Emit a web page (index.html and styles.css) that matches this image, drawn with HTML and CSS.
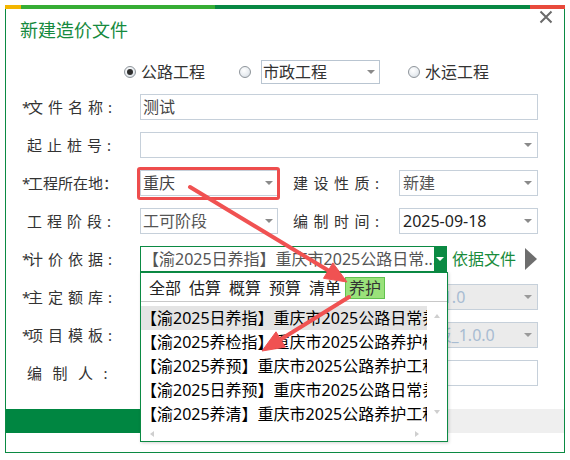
FILE: index.html
```html
<!DOCTYPE html>
<html lang="zh-CN">
<head>
<meta charset="utf-8">
<title>新建造价文件</title>
<link rel="stylesheet" href="styles.css">
</head>
<body>
<div class="dialog">
  <div class="stripe"><i class="s-yellow"></i><i class="s-light"></i><i class="s-dark"></i><i class="s-red"></i></div>
  <div class="header">
    <div class="title">新建造价文件</div>
    <svg class="close" width="14" height="14" viewBox="0 0 14 14"><path d="M1.5 1.5 L12.5 12.5 M12.5 1.5 L1.5 12.5" stroke="#6a6a6a" stroke-width="2" fill="none"/></svg>
  </div>
  <div class="radios">
    <span class="radio on"></span><span class="rtext">公路工程</span>
    <span class="radio r2"></span>
    <div class="msel"><span class="val">市政工程</span><span class="caret"></span></div>
    <span class="radio r3"></span><span class="rtext">水运工程</span>
  </div>
  <div class="form">
    <div class="row">
      <div class="lbl ls5"><span class="star">*</span>文件名称:</div>
      <div class="field w-full"><span class="val">测试</span></div>
    </div>
    <div class="row">
      <div class="lbl ls5 ind">起止桩号:</div>
      <div class="field w-full"><span class="val"></span><span class="caret"></span></div>
    </div>
    <div class="row">
      <div class="lbl"><span class="star">*</span>工程所在地：</div>
      <div class="field w-half hlwrap"><span class="val">重庆</span><span class="caret"></span><span class="hl"></span></div>
      <div class="lbl2 ls55">建设性质:</div>
      <div class="field w-right"><span class="val soft">新建</span><span class="caret"></span></div>
    </div>
    <div class="row">
      <div class="lbl ls5 ind">工程阶段:</div>
      <div class="field w-half"><span class="val soft">工可阶段</span><span class="caret"></span></div>
      <div class="lbl2 ls55">编制时间:</div>
      <div class="field w-right"><span class="val dark">2025-09-18</span><span class="caret"></span></div>
    </div>
    <div class="row">
      <div class="lbl ls5"><span class="star">*</span>计价依据:</div>
      <div class="field w-basis active">
        <span class="val soft">【渝2025日养指】重庆市2025公路日常...</span>
        <span class="dbtn"><span class="wcaret"></span></span>
        <div class="popup">
          <div class="tabs">
            <span class="tab">全部</span><span class="tab">估算</span><span class="tab">概算</span><span class="tab">预算</span><span class="tab">清单</span><span class="tab on">养护</span>
          </div>
          <div class="pbody">
            <div class="list">
              <div class="item sel">【渝2025日养指】重庆市2025公路日常养护指标</div>
              <div class="item">【渝2025养检指】重庆市2025公路养护检测指标</div>
              <div class="item">【渝2025养预】重庆市2025公路养护工程预算定额</div>
              <div class="item">【渝2025日养预】重庆市2025公路日常养护预算定额</div>
              <div class="item">【渝2025养清】重庆市2025公路养护工程清单</div>
            </div>
            <div class="vscroll"><span class="up"></span><span class="down"></span></div>
            <div class="hscroll"><span class="left"></span><span class="right"></span></div>
            <div class="corner"></div>
          </div>
        </div>
      </div>
      <span class="doclink">依据文件</span>
      <span class="play"></span>
    </div>
    <div class="row">
      <div class="lbl ls5"><span class="star">*</span>主定额库:</div>
      <div class="field w-full disabled"><span class="val">重庆市2025公路养护工程预算定额标准库_1.0</span><span class="caret"></span></div>
    </div>
    <div class="row">
      <div class="lbl ls5"><span class="star">*</span>项目模板:</div>
      <div class="field w-full disabled"><span class="val">重庆市2025公路养护工程预算标准项目模板_1.0.0</span><span class="caret"></span></div>
    </div>
    <div class="row">
      <div class="lbl ls11 ind">编制人:</div>
      <div class="field w-full"><span class="val"></span></div>
    </div>
  </div>
  <div class="progress"><div class="fill"></div></div>
</div>
<svg class="arrows" width="570" height="460" viewBox="0 0 570 460">
  <g fill="#f05252" stroke="#f05252">
    <line x1="190" y1="187" x2="330" y2="271.5" stroke-width="4" stroke-linecap="round"/>
    <polygon points="347,282 323.5,278.3 332.9,262.9" stroke-width="1" stroke-linejoin="round"/>
    <line x1="349" y1="297" x2="279" y2="340.5" stroke-width="4" stroke-linecap="round"/>
    <polygon points="262,351 285.4,347.1 276,331.8" stroke-width="1" stroke-linejoin="round"/>
  </g>
</svg>
</body>
</html>
```

FILE: styles.css
```css
* { box-sizing: border-box; }

body {
  margin: 0;
  background: #fff;
  font-family: "Noto Sans", "Noto Sans CJK SC", sans-serif;
  color: #333;
}

.dialog {
  position: relative;
  margin: 5px 0 0 5px;
  width: 560px;
  height: 448px;
  border: 1px solid #0b8a43;
  border-top: 0;
  background: #fff;
}

.stripe { display: flex; height: 4px; margin: 0 -1px; }
.stripe i { display: block; height: 100%; }
.s-yellow { width: 16px; background: #f3b600; }
.s-light { width: 194px; background: #36ad35; }
.s-dark { flex: 1; background: #078843; }
.s-red { width: 35px; background: #e84a3c; }

.header {
  display: flex;
  justify-content: space-between;
  align-items: flex-start;
  height: 33px;
}
.title {
  margin: 9px 0 0 14px;
  font-size: 18px;
  line-height: 24px;
  color: #168a3e;
}
.close { margin: 1px 11px 0 0; }

/* radio row */
.radios {
  display: flex;
  align-items: center;
  height: 24px;
  margin-top: 18px;
  padding-left: 118px;
  font-size: 16px;
  line-height: 22px;
  color: #333;
}
.radio {
  position: relative;
  width: 12px;
  height: 12px;
  border-radius: 50%;
  border: 1px solid #8e949a;
  background: radial-gradient(circle at 40% 35%, #ffffff 0%, #e9edf1 55%, #c9d0d8 100%);
}
.radio.on::after {
  content: "";
  position: absolute;
  left: 2px;
  top: 2px;
  width: 6px;
  height: 6px;
  border-radius: 50%;
  background: #2e2e2e;
}
.rtext { margin-left: 5px; }
.r2 { margin-left: 34px; }
.r3 { margin-left: 28px; }
.msel {
  display: flex;
  align-items: center;
  margin-left: 10px;
  width: 119px;
  height: 24px;
  border: 1px solid #b9c5d1;
  padding-left: 1px;
}

/* form */
.form {
  margin-top: 10px;
  padding-left: 16px;
  display: flex;
  flex-direction: column;
  gap: 12px;
}
.row { display: flex; align-items: center; height: 26px; }
.lbl {
  width: 118px;
  font-size: 15px;
  line-height: 20px;
  color: #333;
  white-space: nowrap;
}
.lbl2 {
  margin-left: 15px;
  width: 106px;
  font-size: 15px;
  line-height: 20px;
  color: #333;
  white-space: nowrap;
}
.ind { padding-left: 5px; }
.ls5 { letter-spacing: 5px; }
.ls55 { letter-spacing: 5.5px; }
.ls11 { letter-spacing: 10.5px; }
.star { display: inline-block; width: 6px; letter-spacing: 0; }

.field {
  display: flex;
  align-items: center;
  height: 26px;
  border: 1px solid #c6d0da;
  background: #fff;
  font-size: 16px;
  line-height: 24px;
  padding-left: 2px;
  color: #444;
}
.val {
  flex: 1;
  min-width: 0;
  white-space: nowrap;
  overflow: hidden;
}
.soft { color: #555; }
.dark { color: #222; }
.w-full { width: 398px; }
.w-half { width: 138px; }
.w-right { width: 139px; padding-left: 3px; }
.w-basis { width: 307px; }

.caret {
  flex: none;
  margin: 0 4px 0 6px;
  width: 0;
  height: 0;
  border-left: 4px solid transparent;
  border-right: 4px solid transparent;
  border-top: 4px solid #8a8a8a;
}
.w-right .caret, .w-full .caret { margin-right: 5px; }

.hlwrap { position: relative; }
.hl {
  position: absolute;
  left: -4px;
  top: -4px;
  right: -3px;
  bottom: -5px;
  border: 3px solid #ee4d4d;
  border-radius: 3px;
}

.disabled { background: #ebebeb; }
.disabled .val { color: #a8bcd2; }
.disabled .caret { border-top-color: #9a9a9a; }

.active {
  position: relative;
  border-color: #0b8a43;
  padding-right: 0;
}
.dbtn {
  flex: none;
  display: flex;
  align-items: center;
  justify-content: center;
  width: 12px;
  height: 100%;
  background: #0b8a43;
}
.wcaret {
  width: 0;
  height: 0;
  border-left: 4px solid transparent;
  border-right: 4px solid transparent;
  border-top: 4px solid #fff;
}
.doclink {
  margin-left: 5px;
  font-size: 16px;
  line-height: 22px;
  color: #1a8c3c;
}
.play {
  margin-left: 9px;
  width: 0;
  height: 0;
  border-left: 12px solid #6e6e6e;
  border-top: 11px solid transparent;
  border-bottom: 11px solid transparent;
}

/* dropdown popup */
.popup {
  position: absolute;
  left: -1px;
  top: 25px;
  width: 308px;
  height: 170px;
  border: 1px solid #0b8a43;
  background: #fff;
  z-index: 10;
  box-shadow: 1px 1px 3px rgba(0, 0, 0, 0.18);
  font-size: 16px;
  color: #111;
}
.tabs {
  display: flex;
  height: 29px;
  padding: 4px 0 0 4px;
  border-bottom: 1px solid #c8c8c8;
}
.tab {
  height: 22px;
  line-height: 20px;
  padding: 0 3px;
  border: 1px solid transparent;
  color: #222;
}
.tab.on {
  background: #9ae27b;
  border-color: #62c24e;
  color: #333;
}
.pbody {
  margin-top: 4px;
  display: grid;
  grid-template-columns: 286px 20px;
  grid-template-rows: 120px 15px;
}
.list { overflow: hidden; }
.item {
  height: 24px;
  line-height: 24px;
  white-space: nowrap;
  color: #000;
}
.item.sel { background: #e4e4e4; }
.vscroll {
  display: flex;
  flex-direction: column;
  justify-content: space-between;
  align-items: center;
  padding: 8px 0 12px;
}
.up, .down {
  width: 0;
  height: 0;
  border-left: 3.5px solid transparent;
  border-right: 3.5px solid transparent;
}
.up { border-bottom: 4px solid #cfcfcf; }
.down { border-top: 4px solid #cfcfcf; }
.hscroll {
  display: flex;
  justify-content: space-between;
  align-items: center;
  padding: 0 8px 0 9px;
}
.left, .right {
  width: 0;
  height: 0;
  border-top: 3.5px solid transparent;
  border-bottom: 3.5px solid transparent;
}
.left { border-right: 4px solid #cfcfcf; }
.right { border-left: 4px solid #cfcfcf; }

/* bottom bar */
.progress {
  margin-top: 23px;
  height: 24px;
  background: #efefef;
}
.progress .fill {
  width: 320px;
  height: 100%;
  background: #008641;
}

.arrows {
  position: absolute;
  left: 0;
  top: 0;
  z-index: 20;
  pointer-events: none;
}
```
